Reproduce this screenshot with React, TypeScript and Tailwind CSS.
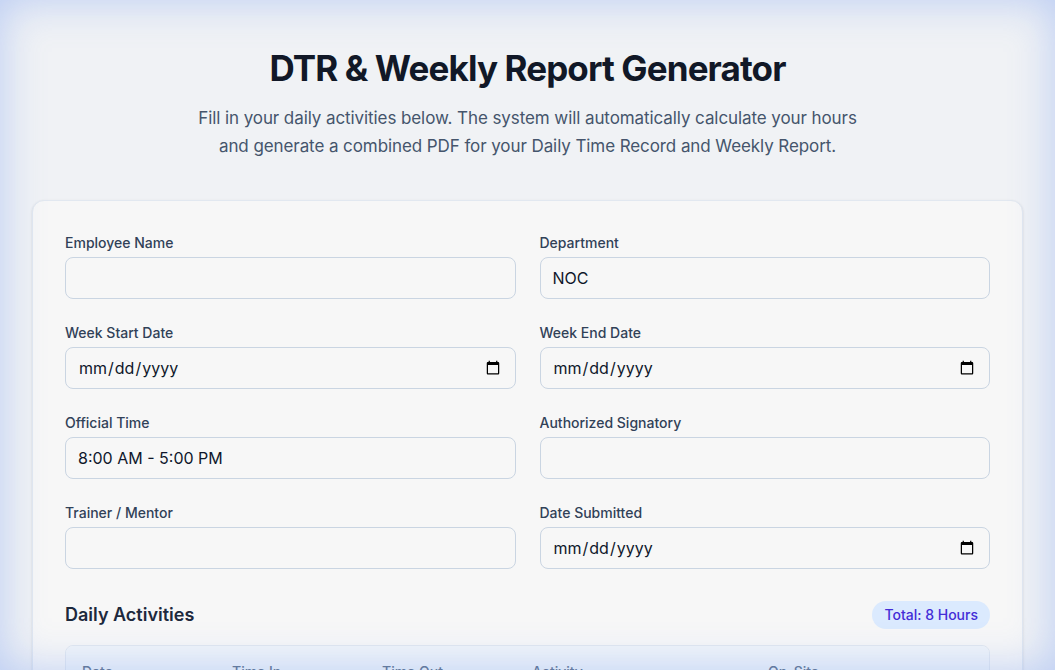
import { useState } from 'react';

interface Field {
  label: string;
  type: 'text' | 'date';
  value?: string;
}

const FIELDS: Field[] = [
  { label: 'Employee Name', type: 'text' },
  { label: 'Department', type: 'text', value: 'NOC' },
  { label: 'Week Start Date', type: 'date' },
  { label: 'Week End Date', type: 'date' },
  { label: 'Official Time', type: 'text', value: '8:00 AM - 5:00 PM' },
  { label: 'Authorized Signatory', type: 'text' },
  { label: 'Trainer / Mentor', type: 'text' },
  { label: 'Date Submitted', type: 'date' },
];

const COLUMNS = ['Date', 'Time In', 'Time Out', 'Activity', 'On-Site'];

export default function App() {
  const [values, setValues] = useState<string[]>(FIELDS.map((f) => f.value ?? ''));

  return (
    <div className="min-h-screen bg-[#f0f2f5] font-['Inter',sans-serif] text-slate-900">
      {/* viewport glow */}
      <div className="pointer-events-none fixed inset-0 z-10 shadow-[inset_0_0_44px_rgba(110,150,240,0.42)]" />

      <div className="mx-auto max-w-[991px] pt-12 pb-16">
        {/* Header */}
        <div className="text-center">
          <h1 className="text-[35px] leading-10 font-bold tracking-tight text-[#111827]">DTR &amp; Weekly Report Generator</h1>
          <p className="mx-auto mt-4 max-w-[680px] text-[17px] leading-7 tracking-[-0.005em] text-slate-600">
            Fill in your daily activities below. The system will automatically calculate your hours
            <br />
            and generate a combined PDF for your Daily Time Record and Weekly Report.
          </p>
        </div>

        {/* Form card */}
        <div className="mt-10 rounded-xl border border-slate-200 bg-[#f7f7f7] p-8 shadow-sm">
          <div className="grid grid-cols-2 gap-6">
            {FIELDS.map((f, i) => (
              <div key={f.label}>
                <label className="mb-1 block text-sm font-medium text-slate-700">{f.label}</label>
                <input
                  type={f.type}
                  value={values[i]}
                  onChange={(e) => setValues((v) => v.map((x, j) => (j === i ? e.target.value : x)))}
                  className="block w-full rounded-lg border border-slate-300 bg-transparent px-3 py-2 text-base text-slate-900 outline-none"
                />
              </div>
            ))}
          </div>

          {/* Daily activities */}
          <div className="mt-8">
            <div className="mb-4 flex items-center justify-between">
              <h2 className="text-lg font-semibold text-slate-800">Daily Activities</h2>
              <span className="rounded-full bg-blue-100 px-3 py-1 text-sm font-medium text-indigo-700">Total: 8 Hours</span>
            </div>
            <div className="overflow-hidden rounded-lg border border-slate-200">
              <table className="w-full text-sm">
                <thead>
                  <tr className="bg-slate-100 text-left">
                    {COLUMNS.map((h, i) => (
                      <th
                        key={h}
                        className={`px-4 pt-4 pb-3 font-medium text-slate-500 ${i < 3 ? 'w-[150px]' : i === 3 ? 'w-[236px]' : ''}`}
                      >
                        {h}
                      </th>
                    ))}
                  </tr>
                </thead>
                <tbody>
                  <tr className="border-t border-slate-200">
                    <td className="px-4 py-3 text-slate-700">—</td>
                    <td className="px-4 py-3 text-slate-700">8:00 AM</td>
                    <td className="px-4 py-3 text-slate-700">5:00 PM</td>
                    <td className="px-4 py-3 text-slate-700">—</td>
                    <td className="px-4 py-3 text-slate-700">Yes</td>
                  </tr>
                </tbody>
              </table>
            </div>
          </div>
        </div>
      </div>
    </div>
  );
}
